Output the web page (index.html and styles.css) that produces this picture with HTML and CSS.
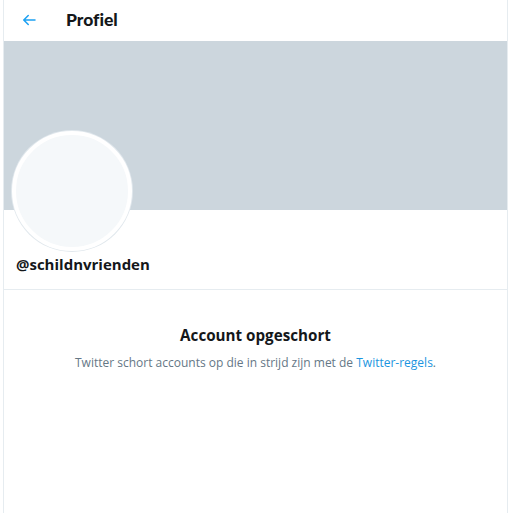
FILE: index.html
```html
<!DOCTYPE html>
<html>
<head>
<meta charset="utf-8">
<link rel="stylesheet" href="styles.css">
</head>
<body>
<div class="page">
  <header class="topbar">
    <div class="back">
      <svg viewBox="0 0 24 24" width="18" height="18"><path d="M20 11H7.414l4.293-4.293a1 1 0 0 0-1.414-1.414l-6 6a1 1 0 0 0 0 1.414l6 6a1 1 0 0 0 1.414-1.414L7.414 13H20a1 1 0 1 0 0-2z" fill="#1da1f2"/></svg>
    </div>
    <h1 class="title">Profiel</h1>
  </header>
  <div class="banner"></div>
  <div class="profile">
    <div class="avatar"></div>
    <div class="handle">@schildnvrienden</div>
  </div>
  <div class="suspended">
    <h2 class="s-title">Account opgeschort</h2>
    <p class="s-text">Twitter schort accounts op die in strijd zijn met de <a href="#" class="link">Twitter-regels</a>.</p>
  </div>
</div>
</body>
</html>
```
FILE: styles.css
```css
html, body {
  margin: 0;
  padding: 0;
  background: #fff;
}
body {
  font-family: "Open Sans", "Noto Sans", sans-serif;
  color: #14171a;
}
.page {
  margin: 0 1px 0 3px;
  border-left: 1px solid #e6ecf0;
  border-right: 1px solid #e6ecf0;
  min-height: 513px;
  box-sizing: border-box;
}
.topbar {
  height: 41px;
  display: flex;
  align-items: center;
  padding-left: 16px;
  box-sizing: border-box;
}
.back {
  width: 18px;
  height: 18px;
  display: flex;
  margin-right: 28px;
  margin-top: -2px;
}
.title {
  margin: 0;
  font-family: "Lato", "Open Sans", sans-serif;
  font-size: 17.5px;
  font-weight: 900;
  font-variant-ligatures: none;
  margin-top: -3px;
}
.banner {
  height: 169px;
  background: #ccd6dd;
}
.profile {
  position: relative;
  padding: 44px 12px 0 12px;
  border-bottom: 1px solid #e6ecf0;
  height: 80px;
  box-sizing: border-box;
}
.avatar {
  position: absolute;
  left: 8px;
  top: -79px;
  width: 112px;
  height: 112px;
  border-radius: 50%;
  background: #f5f8fa;
  border: 4px solid #fff;
  box-shadow: 0 0 0 1px #e1e8ed;
}
.handle {
  font-size: 15px;
  font-weight: 700;
  line-height: 20px;
}
.suspended {
  text-align: center;
  padding-top: 34px;
}
.s-title {
  margin: 0;
  font-size: 15.2px;
  font-weight: 700;
  line-height: 22px;
}
.s-text {
  margin: 8px 0 0;
  font-size: 12px;
  color: #657786;
  line-height: 18px;
}
.link {
  color: #1b95e0;
  text-decoration: none;
}
```
